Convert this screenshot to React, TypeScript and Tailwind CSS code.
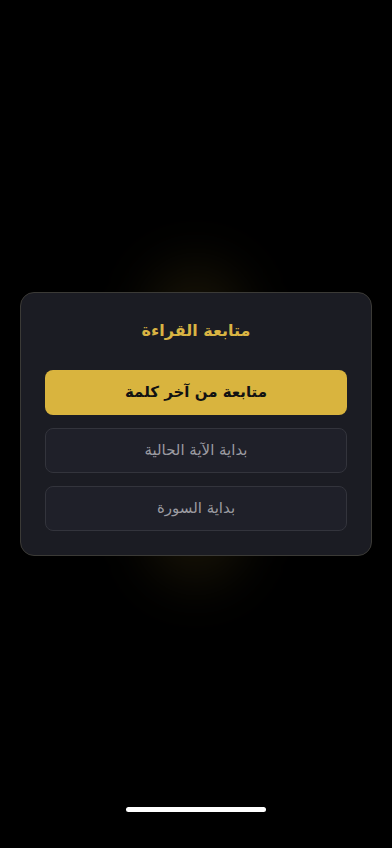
import React from "react";

const options = [
  { label: "متابعة من آخر كلمة", primary: true },
  { label: "بداية الآية الحالية", primary: false },
  { label: "بداية السورة", primary: false },
];

export default function App() {
  return (
    <div
      dir="rtl"
      className="relative flex h-[848px] w-[392px] flex-col items-center justify-center overflow-hidden bg-black"
      style={{ fontFamily: '"DejaVu Sans", "Noto Sans", sans-serif' }}
    >
      <div className="relative w-[352px]">
        {/* soft gold glow behind the card */}
        <div className="pointer-events-none absolute left-1/2 top-1/2 h-[320px] w-[100px] -translate-x-1/2 -translate-y-1/2 rounded-full bg-[#d9b43f]/10 blur-[26px]" />
        <div className="relative rounded-[14px] border border-[#3b3a36] bg-[#1b1c23] px-6 pb-6 pt-6">
          <h2 className="mb-[25px] h-7 text-center text-[16px] font-bold leading-7 text-[#d9b443]">
            متابعة القراءة
          </h2>
          <div className="flex flex-col gap-[13px]">
            {options.map((opt) =>
              opt.primary ? (
                <button
                  key={opt.label}
                  className="h-[45px] w-full rounded-[8px] bg-[#d9b43e] text-[15px] font-bold text-[#121212]"
                >
                  {opt.label}
                </button>
              ) : (
                <button
                  key={opt.label}
                  className="h-[45px] w-full rounded-[8px] border border-[#33343c] bg-[#1f2029] text-[15px] text-[#9b9ba1]"
                >
                  {opt.label}
                </button>
              )
            )}
          </div>
        </div>
      </div>
      <div className="absolute bottom-[36px] left-[126px] h-[5px] w-[140px] rounded-full bg-white" />
    </div>
  );
}
